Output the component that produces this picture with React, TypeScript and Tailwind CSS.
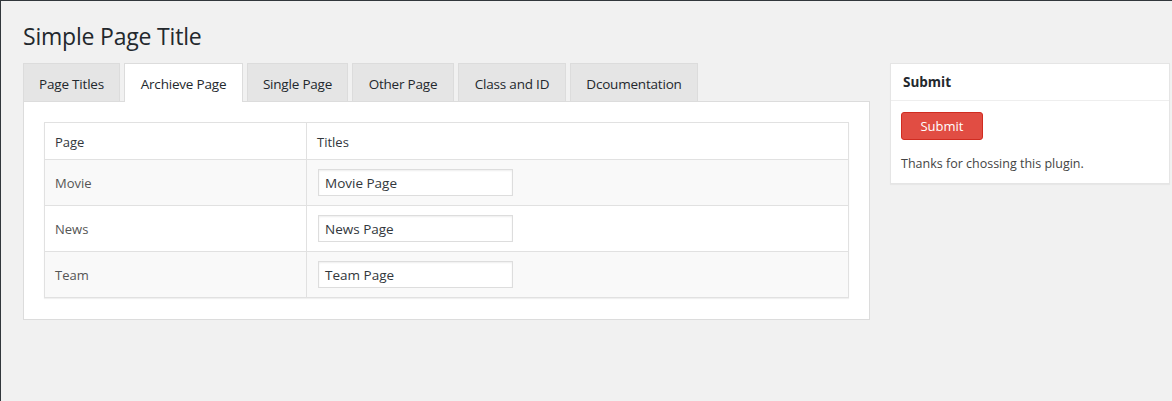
import React from "react";

const tabs = [
  { label: "Page Titles", w: "w-[97px]" },
  { label: "Archieve Page", w: "w-[119px]", active: true },
  { label: "Single Page", w: "w-[101px]" },
  { label: "Other Page", w: "w-[102px]" },
  { label: "Class and ID", w: "w-[108px]" },
  { label: "Dcoumentation", w: "w-[128px]" },
];

const rows = [
  { page: "Movie", title: "Movie Page", bg: "bg-[#f9f9f9]", h: "h-[46px]" },
  { page: "News", title: "News Page", bg: "bg-white", h: "h-[46px]" },
  { page: "Team", title: "Team Page", bg: "bg-[#f9f9f9]", h: "h-[45px]" },
];

export default function App() {
  return (
    <div
      className="w-[1172px] h-[401px] bg-[#f1f1f1] border-t border-l border-[#32373c] overflow-hidden text-[#23282d]"
      style={{ fontFamily: '"Open Sans", "Noto Sans", sans-serif' }}
    >
      <div className="pl-[22px] pt-[20px] h-[62px]">
        <h1 className="text-[23px] leading-[31px] font-normal text-[#23282d] tracking-[-0.2px]">
          Simple Page Title
        </h1>
      </div>
      <div className="flex pl-[22px] gap-[20px]">
        <div className="w-[847px]">
          <div className="flex gap-[4px] h-[38px] relative z-10">
            {tabs.map((t) =>
              t.active ? (
                <div
                  key={t.label}
                  className={`${t.w} h-[39px] bg-white border border-b-0 border-[#dcdcdc] pt-[3px] flex items-center justify-center text-[13.5px] text-[#23282d] tracking-[-0.2px]`}
                >
                  {t.label}
                </div>
              ) : (
                <div
                  key={t.label}
                  className={`${t.w} h-[38px] bg-[#e5e5e5] border border-b-0 border-[#dcdcdc] pt-[3px] flex items-center justify-center text-[13.5px] text-[#23282d] tracking-[-0.2px]`}
                >
                  {t.label}
                </div>
              )
            )}
          </div>
          <div className="bg-white border border-[#dcdcdc] px-[20px] pt-[20px] pb-[21px]">
            <div className="border border-[#e1e1e1] shadow-[0_1px_1px_rgba(0,0,0,0.06)]">
              <div className="flex h-[37px] bg-white border-b border-[#e1e1e1] text-[13px] text-[#32373c]">
                <div className="w-[262px] border-r border-[#e1e1e1] pl-[10px] pt-[3px] flex items-center">Page</div>
                <div className="flex-1 pl-[10px] pt-[3px] flex items-center">Titles</div>
              </div>
              {rows.map((r, i) => (
                <div
                  key={r.page}
                  className={`flex ${r.h} ${r.bg} ${i < rows.length - 1 ? "border-b border-[#e1e1e1]" : ""} text-[13px]`}
                >
                  <div className="w-[262px] border-r border-[#e1e1e1] pl-[10px] pt-[2px] flex items-center text-[#555]">
                    {r.page}
                  </div>
                  <div className="flex-1 pl-[11px] flex items-center">
                    <div className="w-[195px] h-[27px] bg-white border border-[#ddd] shadow-[inset_0_1px_2px_rgba(0,0,0,0.07)] pl-[6px] pt-[1px] flex items-center text-[13.5px] text-[#32373c]">
                      {r.title}
                    </div>
                  </div>
                </div>
              ))}
            </div>
          </div>
        </div>
        <div className="w-[280px]">
          <div className="bg-white border border-[#e5e5e5] shadow-[0_1px_1px_rgba(0,0,0,0.04)]">
            <div className="h-[37px] border-b border-[#eee] pl-[12px] flex items-center text-[13.5px] font-bold text-[#23282d]">
              Submit
            </div>
            <div className="px-[10px] pt-[11px] pb-[9px]">
              <button className="w-[82px] h-[28px] bg-[#e14d43] border border-[#d02c21] rounded-[3px] text-white text-[13px] leading-none">
                Submit
              </button>
              <p className="mt-[14px] text-[12.5px] text-[#444] leading-[20px]">
                Thanks for chossing this plugin.
              </p>
            </div>
          </div>
        </div>
      </div>
    </div>
  );
}
